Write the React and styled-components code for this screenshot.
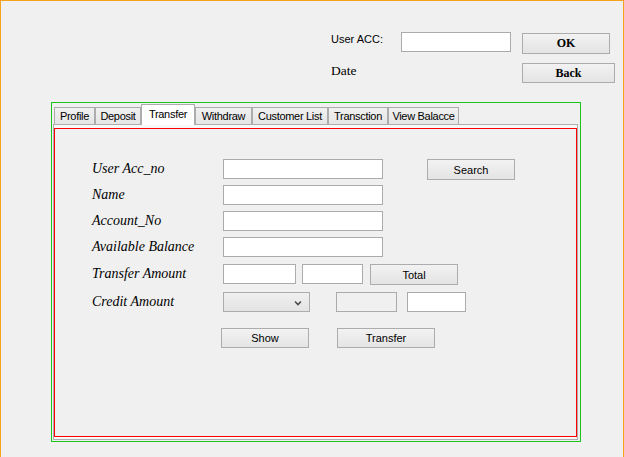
import React from 'react';
import styled, { createGlobalStyle } from "styled-components";

const GlobalStyle = createGlobalStyle`
  body {
    margin: 0;
    background: #f0f0f0;
  }
`;

const Frame = styled.div`
  width: 624px;
  height: 457px;
  box-sizing: border-box;
  border: 1px solid #f6a21d;
  border-bottom: none;
  background: #f0f0f0;
  padding-top: 31px;
  overflow: hidden;
`;

const Header = styled.div`
  display: grid;
  grid-template-columns: 70px 121px auto;
  grid-template-rows: 22px 20px;
  row-gap: 9px;
  padding-left: 330px;
  align-items: start;
`;

const AccLabel = styled.div`
  font-family: "Liberation Sans", Arial, sans-serif;
  font-size: 11px;
  line-height: 14px;
  color: #000;
`;

const DateLabel = styled.div`
  font-family: "Liberation Serif", "Times New Roman", serif;
  font-size: 13.5px;
  line-height: 16px;
  color: #000;
`;

const Field = styled.div`
  width: ${p => p.w || 110}px;
  height: 20px;
  box-sizing: border-box;
  border: 1px solid #ababab;
  background: ${p => (p.disabled ? "#f0f0f0" : "#fff")};
  margin-left: ${p => p.ml || 0}px;
`;

const Button = styled.div`
  width: ${p => p.w}px;
  height: ${p => p.h || 20}px;
  margin-top: ${p => p.mt || 0}px;
  margin-left: ${p => p.ml || 0}px;
  box-sizing: border-box;
  border: 1px solid #acacac;
  background: linear-gradient(#f2f2f2, #e4e4e4);
  display: flex;
  align-items: center;
  justify-content: center;
  font-family: ${p => (p.serif ? '"Liberation Serif", "Times New Roman", serif' : '"Liberation Sans", Arial, sans-serif')};
  font-size: ${p => (p.serif ? 12 : 11)}px;
  font-weight: ${p => (p.serif ? 700 : 400)};
  color: #000;
`;

const GreenBox = styled.div`
  margin: 19px 0 0 50px;
  width: 530px;
  height: 340px;
  box-sizing: border-box;
  border: 1px solid #1cc31c;
  padding: 1px 2px 1px 1px;
  display: flex;
  flex-direction: column;
`;

const TabStrip = styled.div`
  height: 20px;
  display: flex;
  align-items: flex-end;
  padding-left: 1px;
  position: relative;
  z-index: 1;
`;

const Tab = styled.div`
  width: ${p => p.w}px;
  height: ${p => (p.active ? 21 : 17)}px;
  margin-bottom: ${p => (p.active ? -1 : 0)}px;
  box-sizing: border-box;
  border: 1px solid #acacac;
  border-bottom: none;
  background: ${p => (p.active ? "#fff" : "linear-gradient(#f0f0f0, #e6e6e6)")};
  padding-top: ${p => (p.active ? 1 : 0)}px;
  font-family: "Liberation Sans", Arial, sans-serif;
  font-size: 11px;
  letter-spacing: -0.3px;
  line-height: 16px;
  text-align: center;
  white-space: nowrap;
  color: #000;
`;

const Panel = styled.div`
  flex: 1;
  display: flex;
  border: 1px solid #adadad;
  background: #f8f8f8;
  padding: 3px 0 2px 0;
`;

const RedBox = styled.div`
  flex: 1;
  border: 1px solid #ff0000;
  background: #f0f0f0;
  padding: 30px 0 0 37px;
  display: flex;
  flex-direction: column;
`;

const Row = styled.div`
  display: flex;
  align-items: flex-start;
  height: ${p => p.h}px;
`;

const FormLabel = styled.div`
  width: ${p => p.w || 131}px;
  flex-shrink: 0;
  font-family: "Liberation Serif", "Times New Roman", serif;
  font-style: italic;
  font-size: 14px;
  line-height: 20px;
  color: #000;
`;

const Combo = styled.div`
  width: 87px;
  height: 20px;
  box-sizing: border-box;
  border: 1px solid #acacac;
  background: linear-gradient(#f0f0f0, #e3e3e3);
  display: flex;
  align-items: center;
  justify-content: flex-end;
  padding: 2px 7px 0 0;
`;

const tabs = [
  ["Profile", 41],
  ["Deposit", 46],
  ["Transfer", 54],
  ["Withdraw", 57],
  ["Customer List", 76],
  ["Transction", 60],
  ["View Balacce", 71],
];

function App() {
  return (
    <Frame>
      <GlobalStyle />
      <Header>
        <AccLabel>User ACC:</AccLabel>
        <Field w={110} />
        <Button w={88} h={21} mt={1} serif>OK</Button>
        <DateLabel>Date</DateLabel>
        <div />
        <Button w={93} serif>Back</Button>
      </Header>
      <GreenBox>
        <TabStrip>
          {tabs.map(([name, w]) => (
            <Tab key={name} w={w} active={name === "Transfer"}>{name}</Tab>
          ))}
        </TabStrip>
        <Panel>
          <RedBox>
            <Row h={26}>
              <FormLabel>User Acc_no</FormLabel>
              <Field w={160} />
              <Button w={88} h={21} ml={44}>Search</Button>
            </Row>
            <Row h={26}>
              <FormLabel>Name</FormLabel>
              <Field w={160} />
            </Row>
            <Row h={26}>
              <FormLabel>Account_No</FormLabel>
              <Field w={160} />
            </Row>
            <Row h={27}>
              <FormLabel>Available Balance</FormLabel>
              <Field w={160} />
            </Row>
            <Row h={28}>
              <FormLabel>Transfer Amount</FormLabel>
              <Field w={73} />
              <Field w={61} ml={6} />
              <Button w={88} h={21} ml={7}>Total</Button>
            </Row>
            <Row h={36}>
              <FormLabel>Credit Amount</FormLabel>
              <Combo>
                <svg width="8" height="6" viewBox="0 0 8 6">
                  <polyline points="1,1.5 4,4.5 7,1.5" fill="none" stroke="#4a4a4a" strokeWidth="1.6" />
                </svg>
              </Combo>
              <Field w={61} ml={26} disabled />
              <Field w={59} ml={10} />
            </Row>
            <Row h={20}>
              <FormLabel w={129} />
              <Button w={88}>Show</Button>
              <Button w={98} ml={28}>Transfer</Button>
            </Row>
          </RedBox>
        </Panel>
      </GreenBox>
    </Frame>
  );
}

export default App;
